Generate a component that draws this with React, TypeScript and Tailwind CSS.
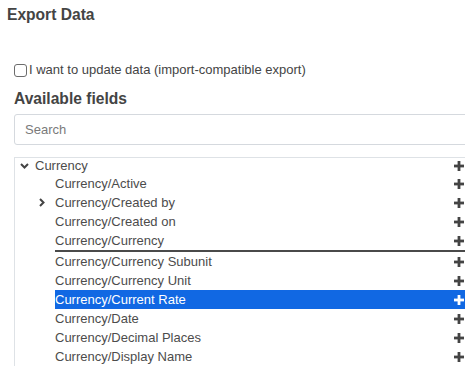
import React from "react"

// 字段树的一行
interface FieldRow {
  label: string
  expandable?: boolean
  selected?: boolean
}

const fields: FieldRow[] = [
  { label: "Currency/Active" },
  { label: "Currency/Created by", expandable: true },
  { label: "Currency/Created on" },
  { label: "Currency/Currency" },
  { label: "Currency/Currency Subunit" },
  { label: "Currency/Currency Unit" },
  { label: "Currency/Current Rate", selected: true },
  { label: "Currency/Date" },
  { label: "Currency/Decimal Places" },
  { label: "Currency/Display Name" },
]

const Plus = ({ white }: { white?: boolean }) => (
  <svg width="10" height="10" viewBox="0 0 10 10" className="shrink-0">
    <g fill={white ? "#ffffff" : "#444444"}>
      <rect x="3.6" y="0" width="2.8" height="10" />
      <rect x="0" y="3.6" width="10" height="2.8" />
    </g>
  </svg>
)

const ChevronDown = () => (
  <svg width="9" height="6" viewBox="0 0 9 6">
    <path d="M1 1l3.5 3.5L8 1" fill="none" stroke="#444" strokeWidth="2" />
  </svg>
)

const ChevronRight = () => (
  <svg width="6" height="9" viewBox="0 0 6 9">
    <path d="M1 1l3.5 3.5L1 8" fill="none" stroke="#444" strokeWidth="2" />
  </svg>
)

export default function App() {
  return (
    <div className="w-[465px] h-[367px] overflow-hidden bg-white font-['Liberation_Sans',Arial,sans-serif] text-[#4c4c4c]">
      {/* 标题 */}
      <div className="pl-[7px] pt-[5px]">
        <h2 className="text-[15.6px] leading-[20px] font-bold text-[#444]">Export Data</h2>
      </div>

      <div className="pl-[14px] w-[474px]">
        {/* 复选框 */}
        <label className="mt-[35px] flex items-center h-[20px] text-[13px] text-[#444]">
          <span className="w-[13px] h-[13px] rounded-[3px] border border-[#6c6c6c] bg-white shrink-0" />
          <span className="ml-[2px]">I want to update data (import-compatible export)</span>
        </label>

        <h3 className="mt-[8px] text-[15.6px] leading-[22px] font-bold text-[#444]">Available fields</h3>

        {/* 搜索框 */}
        <div className="mt-[4px] h-[31px] rounded-[3px] border border-[#d5d9de] flex items-center pl-[10px] text-[13px] text-[#7a7a7a]">
          Search
        </div>

        {/* 字段树 */}
        <div className="mt-[12px] border-l border-t border-[#dee2e6] text-[13px]">
          <div className="flex h-[16px] items-center">
            <div className="w-[20px] pl-[5px] flex items-center">
              <ChevronDown />
            </div>
            <div className="flex-1 flex items-center justify-between pr-[10px]">
              <span>Currency</span>
              <Plus />
            </div>
          </div>

          {fields.map((f) => (
            <React.Fragment key={f.label}>
              <div className="flex h-[19px]">
                <div className="w-[40px] pl-[24px] flex items-center">
                  {f.expandable && <ChevronRight />}
                </div>
                <div
                  className={`flex-1 flex items-center justify-between pr-[10px] ${
                    f.selected ? "bg-[#1168e3] text-white" : ""
                  }`}
                >
                  <span>{f.label}</span>
                  <Plus white={f.selected} />
                </div>
              </div>
              {f.label === "Currency/Currency" && <div className="ml-[40px] h-[2px] bg-[#4a4a4a]" />}
            </React.Fragment>
          ))}
        </div>
      </div>
    </div>
  )
}
